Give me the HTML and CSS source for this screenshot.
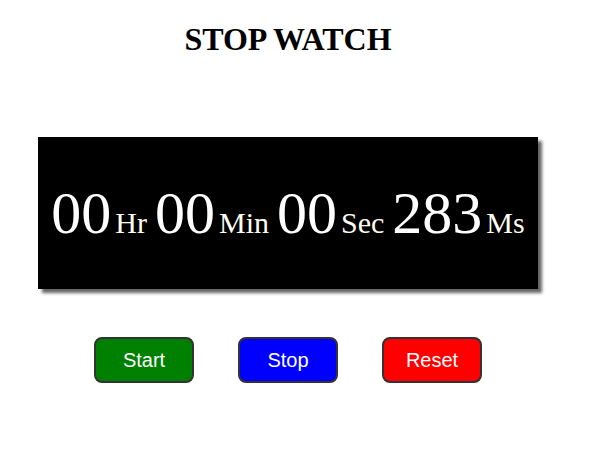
FILE: index.html
```html
<!DOCTYPE html>
<html>
<head>
<meta charset="utf-8">
<link rel="stylesheet" href="styles.css">
</head>
<body>
<div class="page">
  <h1 class="title">STOP WATCH</h1>
  <div class="display">
    <div class="time"><span class="num">00</span><span class="unit">Hr</span><span class="num">00</span><span class="unit">Min</span><span class="num">00</span><span class="unit">Sec</span><span class="num">283</span><span class="unit last">Ms</span></div>
  </div>
  <div class="controls">
    <button class="btn start">Start</button>
    <button class="btn stop">Stop</button>
    <button class="btn reset">Reset</button>
  </div>
</div>
</body>
</html>
```
FILE: styles.css
```css
html, body {
  margin: 0;
  padding: 0;
  background: #fff;
}
.page {
  width: 560px;
  margin: 0 8px;
  padding-top: 22px;
  font-family: "Liberation Serif", "Times New Roman", serif;
}
.title {
  margin: 0;
  font-size: 32px;
  line-height: 34px;
  font-weight: bold;
  text-align: center;
  color: #000;
}
.display {
  width: 500px;
  height: 152px;
  margin: 81px auto 0;
  background: #000;
  box-shadow: 4px 4px 3px #666;
  display: flex;
  align-items: center;
  justify-content: center;
}
.time {
  color: #fff;
  white-space: nowrap;
}
.num {
  font-size: 60px;
}
.unit {
  font-size: 30px;
  margin-left: 4px;
  margin-right: 8px;
  color: #fffdf0;
}
.unit.last {
  margin-right: 0;
}
.controls {
  display: flex;
  justify-content: center;
  gap: 44px;
  margin-top: 48px;
}
.btn {
  width: 100px;
  height: 46px;
  border: 2px solid #333;
  border-radius: 8px;
  color: #fff;
  font-family: "Liberation Sans", Arial, sans-serif;
  font-size: 20px;
  padding: 0;
  cursor: pointer;
}
.start { background: #008000; }
.stop { background: #0000ff; }
.reset { background: #ff0000; }
```
